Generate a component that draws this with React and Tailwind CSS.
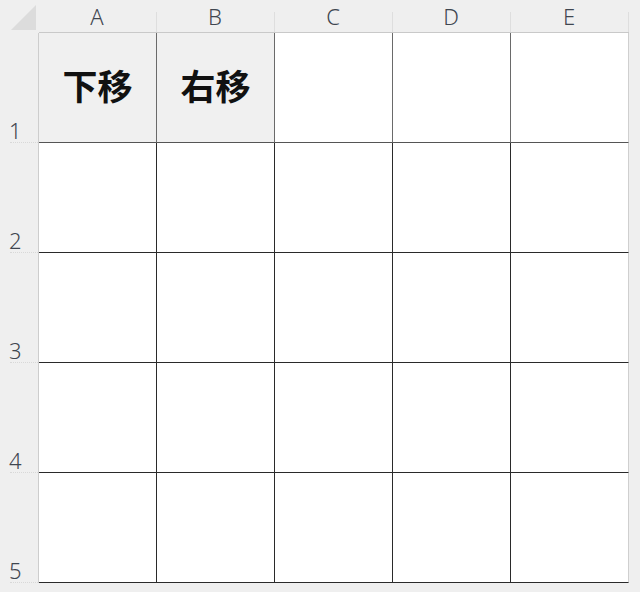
import React from "react";

const cols = ["A", "B", "C", "D", "E"];
const rows = [1, 2, 3, 4, 5];
const font = { fontFamily: '"Noto Sans", "Liberation Sans", sans-serif' };

export default function App() {
  return (
    <div className="w-[640px] h-[592px] bg-[#efefef] overflow-hidden" style={font}>
      {/* header row */}
      <div className="flex h-[33px]">
        <div className="w-[39px] h-[33px] relative">
          <svg width="39" height="33" className="block">
            <polygon points="36,5 36,30 11,30" fill="#dcdcdc" />
          </svg>
        </div>
        {cols.map((c, i) => (
          <div
            key={c}
            className="w-[118px] h-[33px] relative flex items-end justify-center pb-[3px] border-b border-[#c9c9c9] text-[22px] font-light text-[#3f4650] leading-[26px]"
          >
            <span className="-ml-[2px]">{c}</span>
            <div className="absolute right-0 bottom-0 w-px h-[20px] bg-[#dedede]" />
          </div>
        ))}
      </div>
      {rows.map((r) => (
        <div key={r} className="flex h-[110px]">
          <div className="w-[39px] h-[110px] relative border-r border-[#cdcdcd]">
            <span className="absolute left-[9px] bottom-[2px] text-[22px] font-light text-[#3f4650] leading-none">
              {r}
            </span>
            <div className="absolute left-[10px] right-0 bottom-0 border-b border-dotted border-[#d8d8d8]" />
          </div>
          {cols.map((c, i) => {
            const head = r === 1 && i < 2;
            const last = i === 4;
            return (
              <div
                key={c}
                className={
                  "w-[118px] h-[110px] flex items-center justify-center border-b " +
                  (r === 1 ? "border-b-[#555555] " : "border-b-[#2a2a2a] ") +
                  (last ? "border-r border-r-[#cfcfcf] " : "border-r ") +
                  (!last && r === 1 ? "border-r-[#6a6a6a] " : "") +
                  (!last && r !== 1 ? "border-r-[#2a2a2a] " : "") +
                  (head ? "bg-[#f0f0f0]" : "bg-white")
                }
              >
                {head && (
                  <span
                    className="text-[35px] font-bold text-[#111111] leading-none -mt-[6px]"
                    style={{ fontFamily: '"Noto Sans CJK SC", "Noto Sans", sans-serif' }}
                  >
                    {i === 0 ? "下移" : "右移"}
                  </span>
                )}
              </div>
            );
          })}
        </div>
      ))}
    </div>
  );
}
